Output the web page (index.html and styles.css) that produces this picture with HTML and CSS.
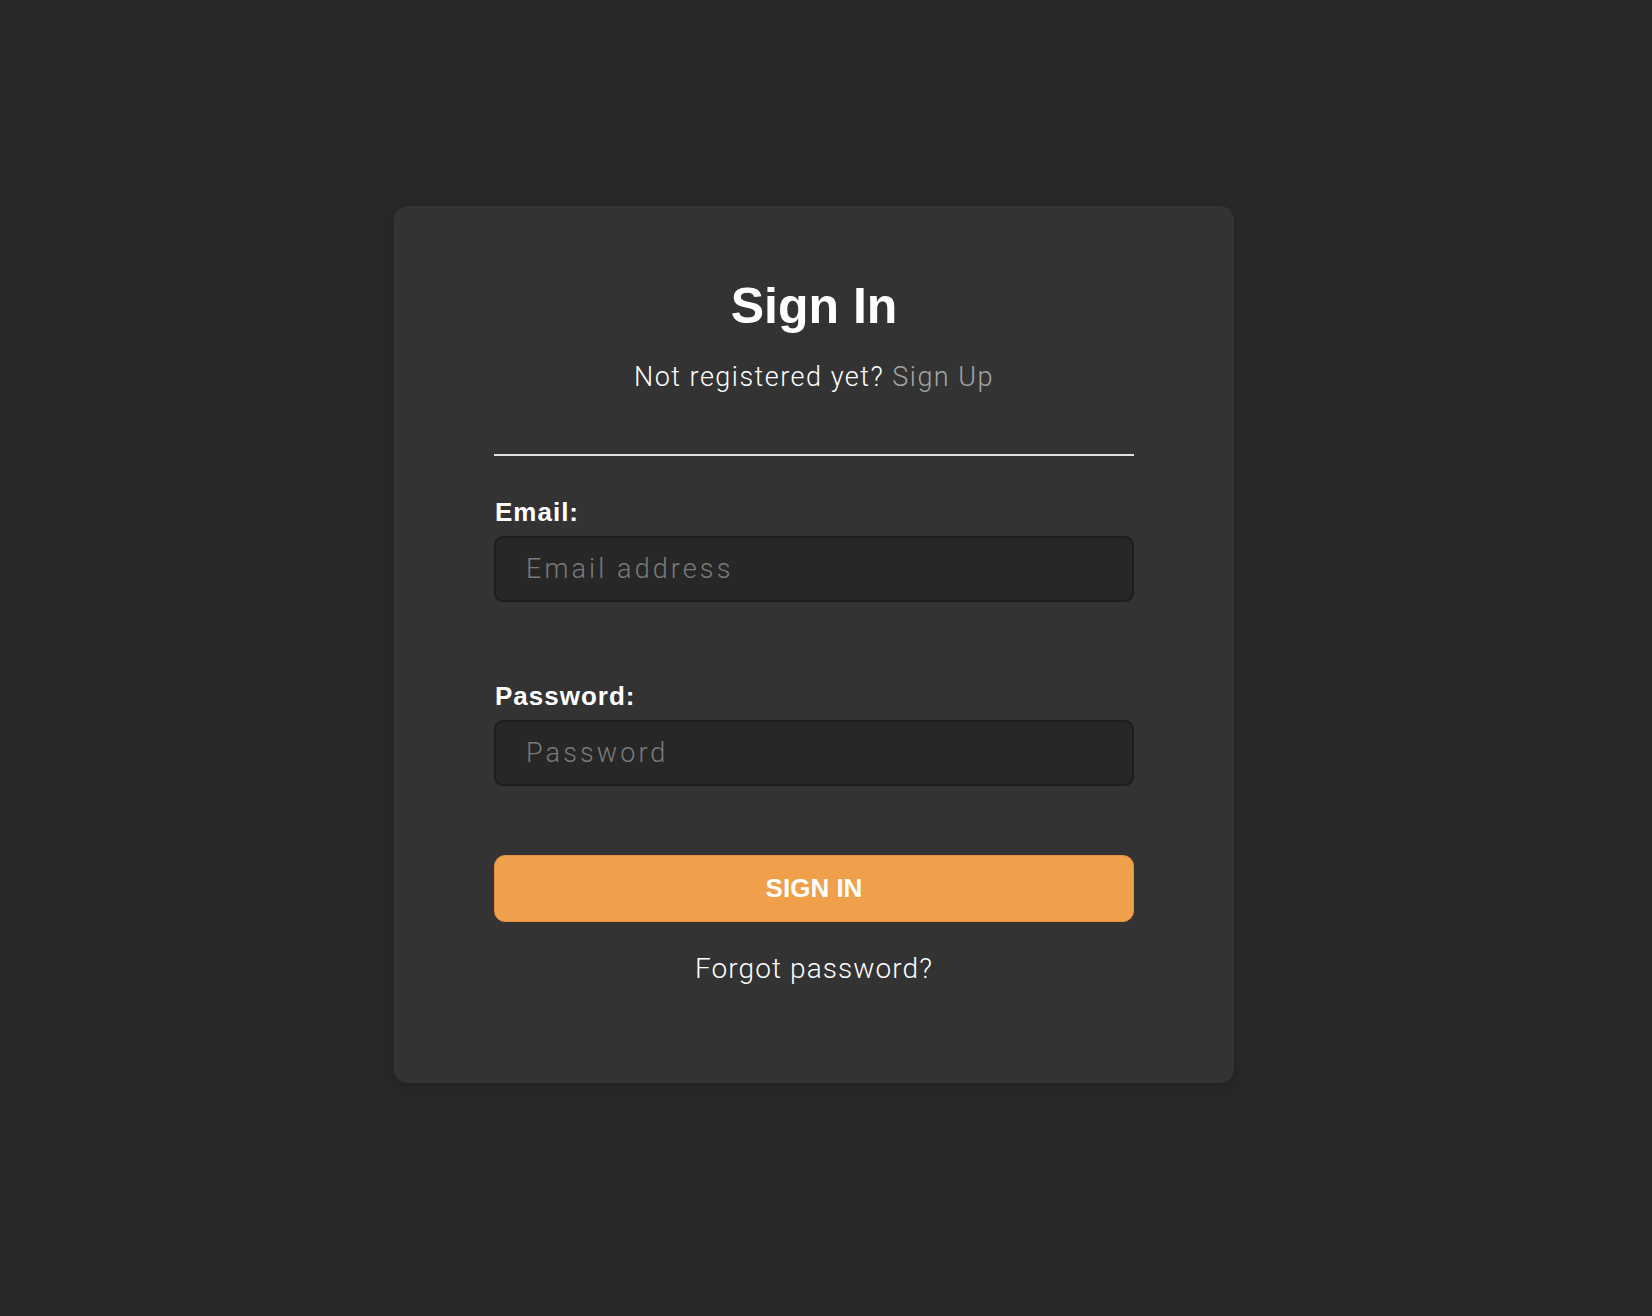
FILE: index.html
```html
<!DOCTYPE html>
<html lang="en">

<head>
  <meta charset="UTF-8">
  <meta name="viewport" content="width=device-width, initial-scale=1.0">
  <title>Sign In</title>
  <link rel="stylesheet" href="styles.css">
</head>

<body>
  <div class="card">
    <h1>Sign In</h1>
    <p class="subtitle">Not registered yet? <a href="#" class="signup">Sign Up</a></p>
    <hr class="divider">

    <!-- Login form -->
    <form class="form" onsubmit="return false">
      <div class="field">
        <label for="email">Email:</label>
        <input type="email" id="email" placeholder="Email address">
      </div>
      <div class="field">
        <label for="password">Password:</label>
        <input type="password" id="password" placeholder="Password">
      </div>
      <button type="submit" class="btn">SIGN IN</button>
    </form>

    <a href="#" class="forgot">Forgot password?</a>
  </div>
</body>

</html>
```

FILE: styles.css
```css
body {
  margin: 0;
  padding: 206px 24px 0 0;
  background-color: #282828;
  font-family: "Liberation Sans", Arial, sans-serif;
  color: #fff;
  display: flex;
  justify-content: center;
  min-height: 1316px;
  box-sizing: border-box;
}

.card {
  width: 840px;
  height: 877px;
  box-sizing: border-box;
  padding: 70px 100px 0;
  background-color: #333333;
  border-radius: 14px;
  box-shadow: 0 4px 12px rgba(0, 0, 0, 0.15);
  text-align: center;
}

h1 {
  margin: 0;
  font-size: 50px;
  line-height: 60px;
  font-weight: bold;
}

.subtitle {
  margin: 25px 0 0;
  font-family: Roboto, "Liberation Sans", sans-serif;
  font-weight: 300;
  font-size: 27px;
  line-height: 32px;
  letter-spacing: 1.5px;
}

.signup {
  color: #a3a3a3;
  text-decoration: none;
}

.divider {
  margin: 61px 0 0;
  border: none;
  border-top: 2px solid #e0e0e0;
  height: 0;
}

.form {
  margin-top: 41px;
  display: flex;
  flex-direction: column;
  text-align: left;
}

.field {
  display: flex;
  flex-direction: column;
  gap: 9px;
  margin-bottom: 79px;
}

.field:last-of-type {
  margin-bottom: 69px;
}

label {
  padding-left: 1px;
  font-size: 26px;
  line-height: 30px;
  font-weight: bold;
  letter-spacing: 1px;
}

input {
  height: 66px;
  box-sizing: border-box;
  padding: 0 30px;
  background-color: #272727;
  border: 2px solid #1d1d1d;
  border-radius: 9px;
  font-family: Roboto, "Liberation Sans", sans-serif;
  font-weight: 300;
  font-size: 27px;
  letter-spacing: 3.1px;
  color: #fff;
  outline: none;
}

input::placeholder {
  color: #7a7a7a;
}

.btn {
  height: 67px;
  background-color: #f0a04b;
  border: 1px solid #e2913c;
  border-radius: 11px;
  color: #fff;
  font-family: "Liberation Sans", Arial, sans-serif;
  font-size: 26px;
  font-weight: bold;
  cursor: pointer;
}

.forgot {
  display: block;
  margin-top: 30px;
  font-family: Roboto, "Liberation Sans", sans-serif;
  font-weight: 300;
  font-size: 28px;
  line-height: 34px;
  letter-spacing: 1.1px;
  color: #fff;
  text-decoration: none;
}
```
